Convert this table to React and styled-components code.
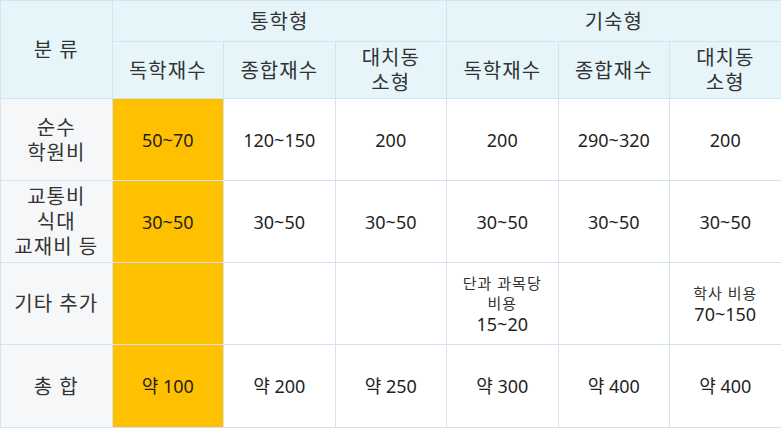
import { styled, createGlobalStyle } from "styled-components";

const GlobalStyle = createGlobalStyle`
  html, body {
    margin: 0;
    padding: 0;
    background: #ffffff;
  }
  body {
    font-family: "Noto Sans", "Noto Sans CJK KR", sans-serif;
    color: #222222;
  }
`;

const columns = [
  { group: "통학형", name: ["독학재수"] },
  { group: "통학형", name: ["종합재수"] },
  { group: "통학형", name: ["대치동", "소형"] },
  { group: "기숙형", name: ["독학재수"] },
  { group: "기숙형", name: ["종합재수"] },
  { group: "기숙형", name: ["대치동", "소형"] },
];

const rows = [
  {
    label: ["순수", "학원비"],
    height: 82,
    cells: [["50~70"], ["120~150"], ["200"], ["200"], ["290~320"], ["200"]],
  },
  {
    label: ["교통비", "식대", "교재비 등"],
    height: 82,
    cells: [["30~50"], ["30~50"], ["30~50"], ["30~50"], ["30~50"], ["30~50"]],
  },
  {
    label: ["기타 추가"],
    height: 82,
    cells: [
      [],
      [],
      [],
      [{ t: "단과 과목당", small: true }, { t: "비용", small: true }, { t: "15~20" }],
      [],
      [{ t: "학사 비용", small: true }, { t: "70~150" }],
    ],
  },
  {
    label: ["총 합"],
    height: 83,
    cells: [["약 100"], ["약 200"], ["약 250"], ["약 300"], ["약 400"], ["약 400"]],
  },
];

const App = () => {
  return (
    <>
      <GlobalStyle />
      <Table>
        <colgroup>
          {Array.from({ length: 7 }).map((_, i) => (
            <col key={i} />
          ))}
        </colgroup>
        <thead>
          <HeadRow $height={41}>
            <HeadCell rowSpan={2}>분 류</HeadCell>
            <HeadCell colSpan={3}>통학형</HeadCell>
            <HeadCell colSpan={3}>기숙형</HeadCell>
          </HeadRow>
          <HeadRow $height={57}>
            {columns.map((c, i) => (
              <HeadCell key={i}>
                {c.name.map((line) => (
                  <Line key={line}>{line}</Line>
                ))}
              </HeadCell>
            ))}
          </HeadRow>
        </thead>
        <tbody>
          {rows.map((row, r) => (
            <BodyRow key={r} $height={row.height}>
              <LabelCell>
                {row.label.map((line) => (
                  <Line key={line}>{line}</Line>
                ))}
              </LabelCell>
              {row.cells.map((cell, i) => (
                <ValueCell key={i} $highlight={i === 0}>
                  {cell.map((item, k) =>
                    typeof item === "string" ? (
                      <Line key={k}>{item}</Line>
                    ) : (
                      <Line key={k} $small={item.small}>
                        {item.t}
                      </Line>
                    )
                  )}
                </ValueCell>
              ))}
            </BodyRow>
          ))}
        </tbody>
      </Table>
    </>
  );
};

export default App;

const Table = styled.table`
  width: 781px;
  table-layout: fixed;
  border-collapse: collapse;
  border: 1px solid #d3e3f0;

  col {
    width: 111.5px;
  }
`;

const HeadRow = styled.tr`
  height: ${(p) => p.$height}px;
`;

const BodyRow = styled.tr`
  height: ${(p) => p.$height}px;
`;

const Cell = styled.td`
  border: 1px solid #d3e3f0;
  text-align: center;
  vertical-align: middle;
  padding: 0;
`;

const HeadCell = styled(Cell).attrs({ as: "th" })`
  background: #e6f5fa;
  font-weight: 400;
  font-size: 20px;
  letter-spacing: 1px;
  color: #333333;
  line-height: 25px;
`;

const LabelCell = styled(Cell)`
  background: #f6f7f9;
  font-size: 20px;
  letter-spacing: 1px;
  line-height: 25px;
  color: #333333;
`;

const ValueCell = styled(Cell)`
  background: ${(p) => (p.$highlight ? "#ffc000" : "#ffffff")};
  font-size: 18px;
  line-height: 22px;
  color: #1f1f1f;
`;

const Line = styled.div`
  font-size: ${(p) => (p.$small ? "15px" : "inherit")};
  letter-spacing: ${(p) => (p.$small ? "1px" : "inherit")};
  line-height: ${(p) => (p.$small ? "20px" : "inherit")};
  color: ${(p) => (p.$small ? "#333333" : "inherit")};
`;
